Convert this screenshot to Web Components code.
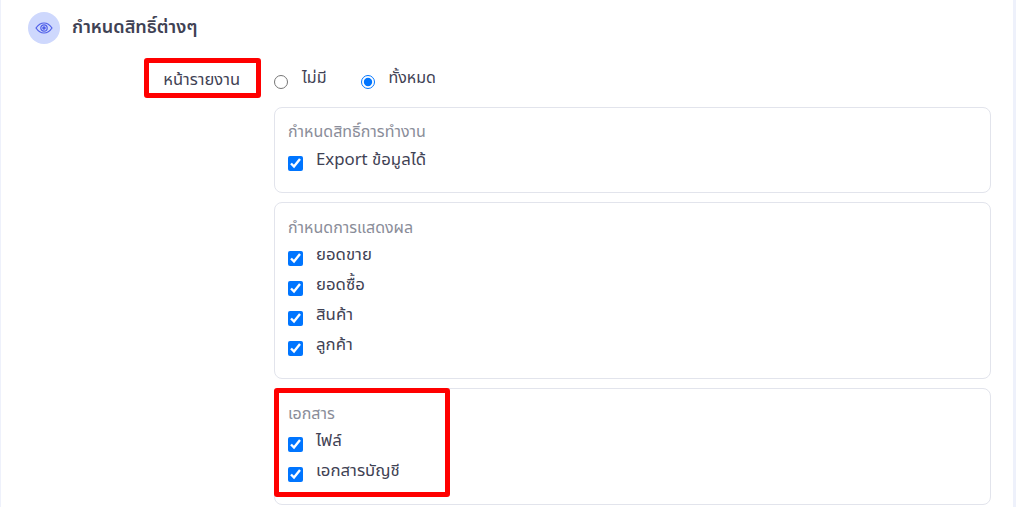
<!DOCTYPE html>
<html lang="th"><head><meta charset="utf-8"><title>สิทธิ์</title>
<style>
html,body{margin:0;height:507px;overflow:hidden;background:#eef1fb}
body{font-family:"Noto Sans","Noto Sans Thai",Inter,"DejaVu Sans",sans-serif;font-size:16px;color:#3f4254}
</style></head><body>
<template id="t-card"><style>
:host{display:block;margin:0 3px 0 1px;height:507px;box-sizing:border-box;background:#fff;position:relative;overflow:hidden;padding:12px 0 0 27px}
</style><slot></slot></template>
<template id="t-head"><style>
:host{display:flex;align-items:center;gap:12px;height:31px;font-weight:600;font-size:18.100px;color:#3f4254}
.c{width:32px;height:32px;border-radius:50%;background:#ced8fd;display:flex;align-items:center;justify-content:center}
</style><span class="c"><svg width="20" height="20" viewBox="0 0 20 20" fill="none" stroke="#4f5fe8" stroke-width="1.200"><path d="M2 10C4.500 6.300 7 5 10 5s5.500 1.300 8 5c-2.500 3.700-5 5-8 5s-5.500-1.300-8-5Z"/><circle cx="10" cy="10" r="3.200"/><circle cx="10" cy="10" r="1.200" fill="#4f5fe8"/></svg></span><span><slot></slot></span></template>
<template id="t-row"><style>
:host{display:grid;grid-template-columns:219px 717px;margin-left:27px;padding-top:14px}
.l{display:flex;justify-content:flex-end;padding:10px 34px 0 0;height:30px;box-sizing:border-box;font-size:16.500px;line-height:24px}
.l span{display:block}
.r{display:flex;flex-direction:column;gap:9px}
</style><div class="l"><span><slot name="label"></slot></span></div><div class="r"><slot></slot></div></template>
<template id="t-radios"><style>
:host{display:flex;height:41px;align-items:flex-start;font-size:16px}
</style><slot></slot></template>
<template id="t-radio"><style>
:host{display:flex;gap:14px;margin-right:34px}
input{display:block;width:14px;height:14px;margin:18px 0 0}
span{display:block;line-height:24px;margin-top:8px}
</style><input type="radio" name="r" tabindex="-1"><span><slot></slot></span></template>
<template id="t-box"><style>
:host{display:block;border:1px solid #e2e4ec;border-radius:8px;box-sizing:border-box;padding:14px 13px 0}
.t{display:block;height:21px;line-height:21px;font-size:16px;color:#8a8d99}
:host([first]) .t{margin-top:-1px;margin-bottom:1px}
</style><span class="t"><slot name="title"></slot></span><slot></slot></template>
<template id="t-check"><style>
:host{display:flex;height:30.300px;gap:13px;font-size:16.800px;color:#3f4254}
input{display:block;width:15px;height:15px;margin:12.500px 0 0;flex:none}
span{display:block;line-height:24px;margin-top:3.500px}
</style><input type="checkbox" checked tabindex="-1"><span><slot></slot></span></template>
<template id="t-mark"><style>
:host{display:block;position:absolute;border:5px solid #f00;border-radius:3px;box-sizing:border-box;pointer-events:none}
</style></template>

<x-card>
<x-head>กำหนดสิทธิ์ต่างๆ</x-head>
<x-row>
<span slot="label">หน้ารายงาน</span>
<x-radios><x-radio>ไม่มี</x-radio><x-radio on>ทั้งหมด</x-radio></x-radios>
<x-box first style="height:86px"><span slot="title">กำหนดสิทธิ์การทำงาน</span><x-check>Export ข้อมูลได้</x-check></x-box>
<x-box style="height:177px"><span slot="title">กำหนดการแสดงผล</span><x-check>ยอดขาย</x-check><x-check>ยอดซื้อ</x-check><x-check>สินค้า</x-check><x-check>ลูกค้า</x-check></x-box>
<x-box style="height:117px"><span slot="title">เอกสาร</span><x-check>ไฟล์</x-check><x-check>เอกสารบัญชี</x-check></x-box>
</x-row>
<x-mark style="left:143px;top:58px;width:117px;height:40px"></x-mark>
<x-mark style="left:273px;top:388px;width:176px;height:109px"></x-mark>
</x-card>
<script>
for(const n of ['card','head','row','radios','radio','box','check','mark']){
 customElements.define('x-'+n,class extends HTMLElement{constructor(){super();this.attachShadow({mode:'open'}).append(document.getElementById('t-'+n).content.cloneNode(true));
 if(n==='radio'&&this.hasAttribute('on'))this.shadowRoot.querySelector('input').checked=true;}});
}
</script>
</body></html>
